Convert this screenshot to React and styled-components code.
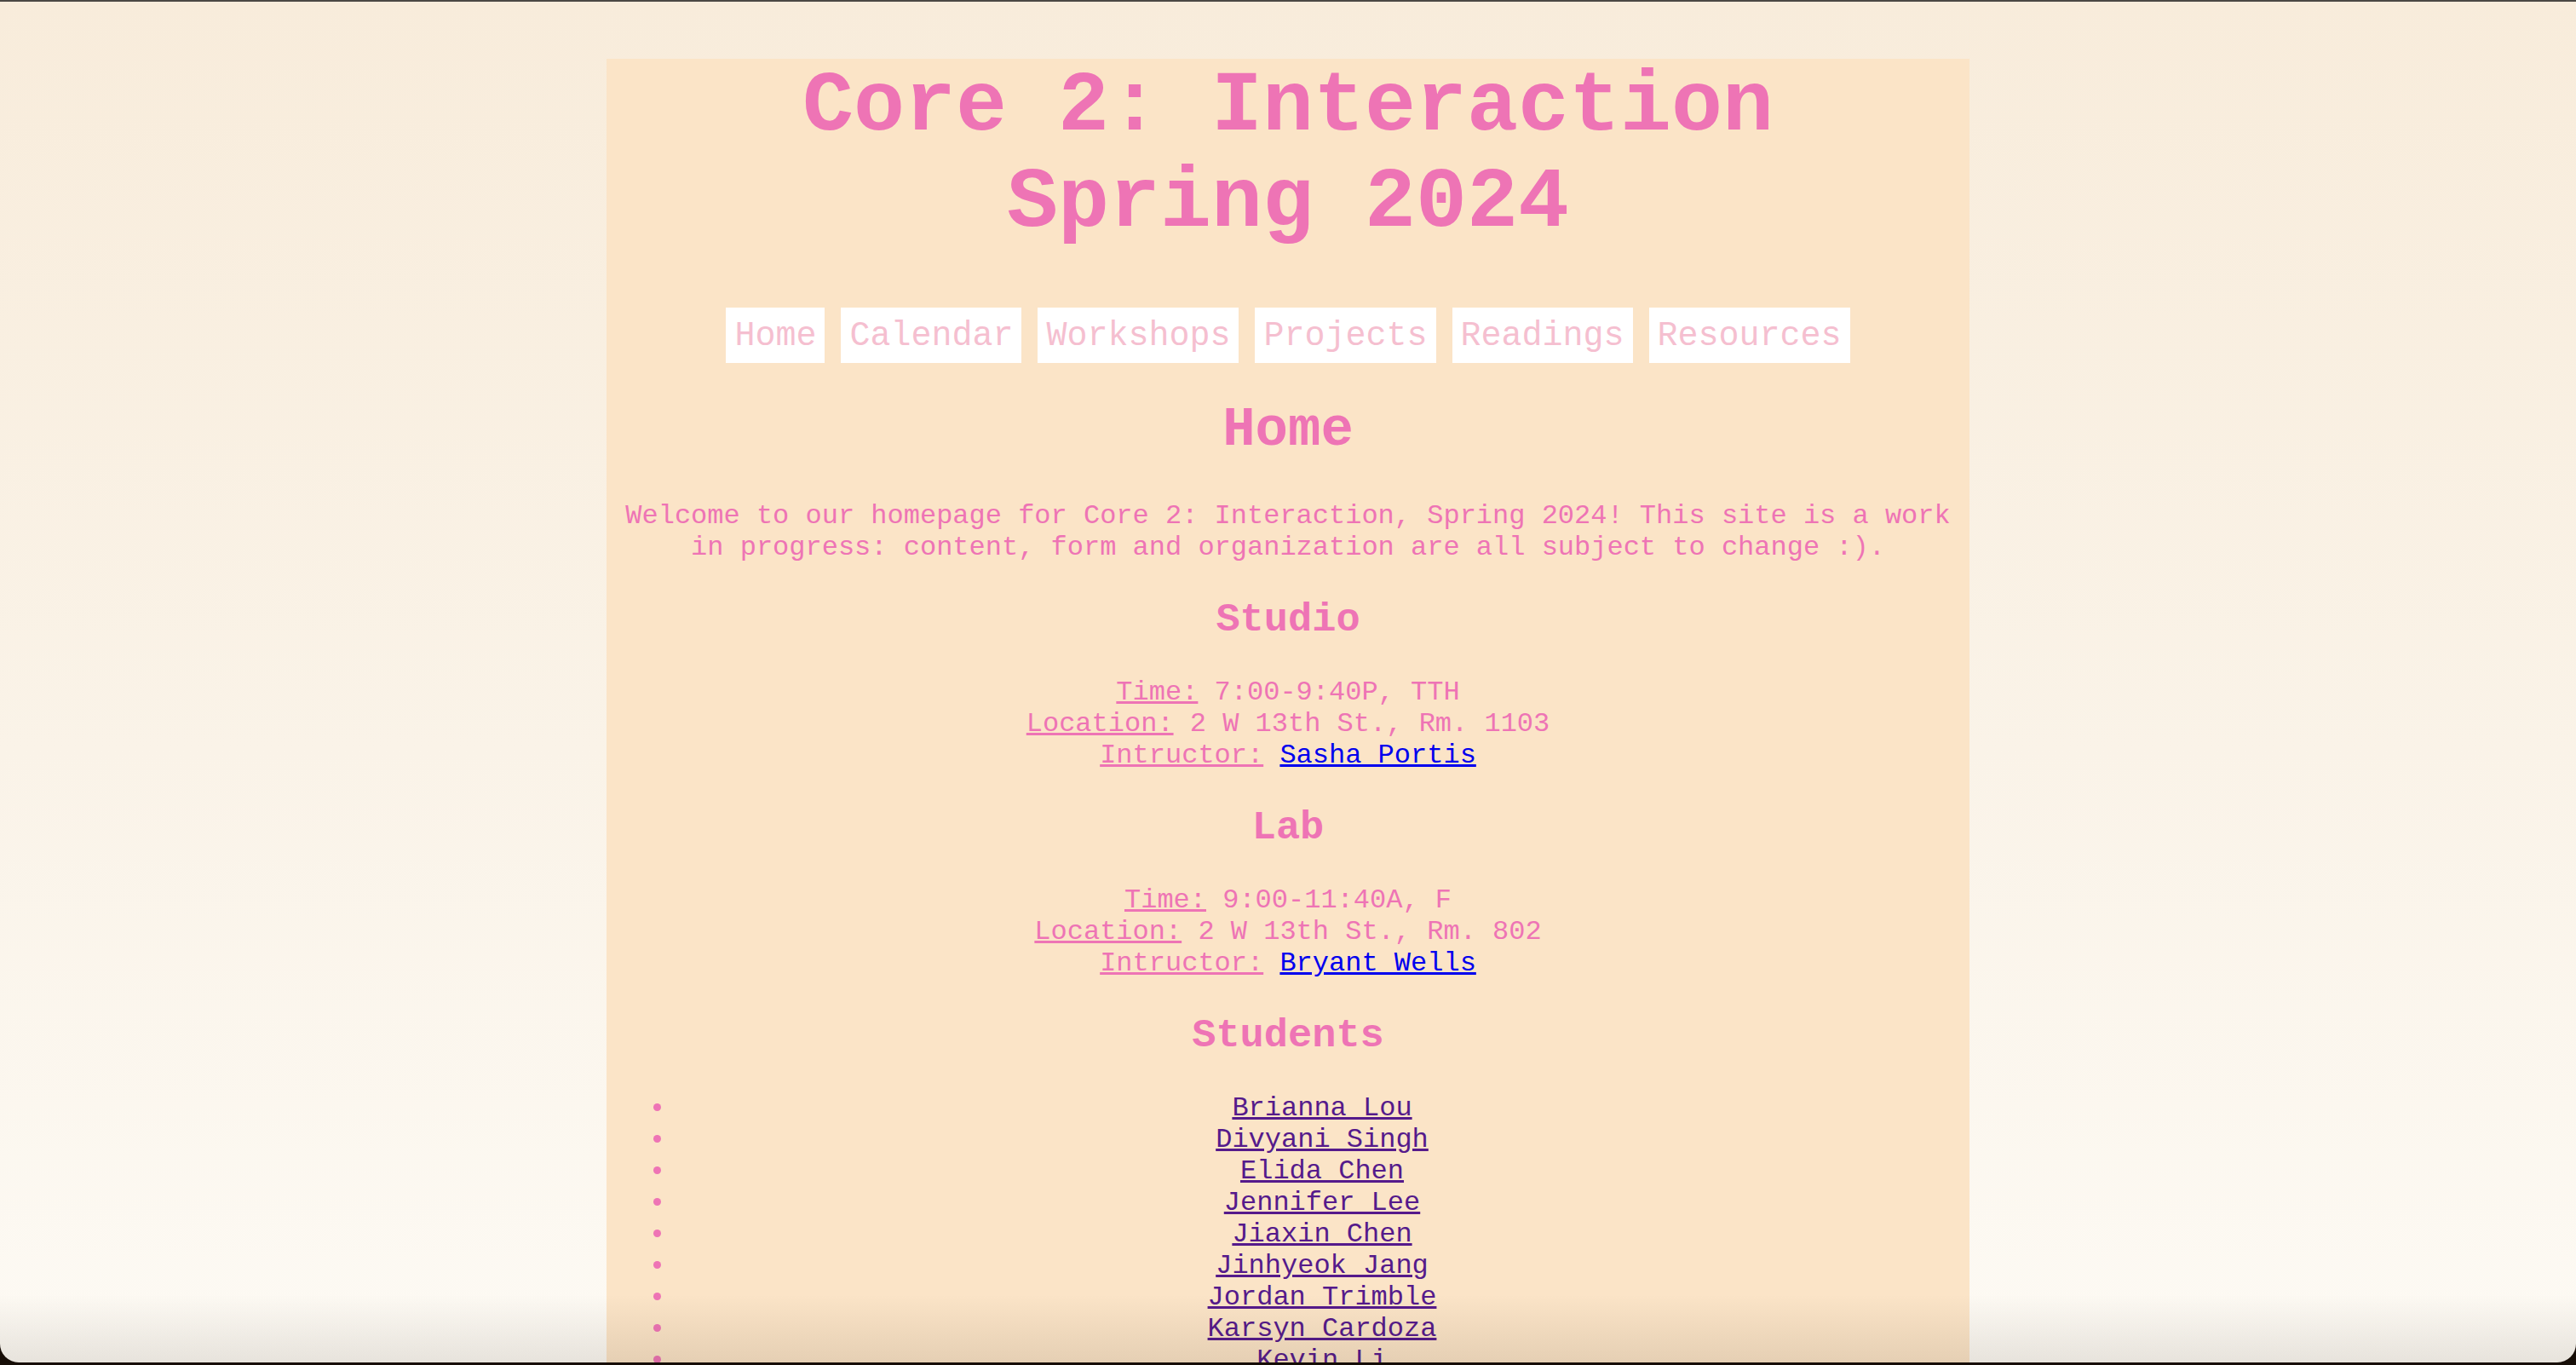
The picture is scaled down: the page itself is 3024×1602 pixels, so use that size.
import React from 'react';
import styled, { createGlobalStyle } from 'styled-components';

const PINK = '#ee74b5';

const GlobalStyle = createGlobalStyle`
  html, body {
    margin: 0;
    padding: 0;
    background: #170e07;
    overflow: hidden;
  }
`;

const Frame = styled.div`
  position: relative;
  box-sizing: border-box;
  height: 1599px;
  border-top: 2px solid #4b4844;
  border-radius: 0 0 22px 22px;
  overflow: hidden;
  background: linear-gradient(180deg, #f8ecdb 0%, #faf3e8 55%, #fdfaf4 100%);
  padding-top: 67px;
`;

const Shade = styled.div`
  position: absolute;
  left: 0;
  right: 0;
  bottom: 0;
  height: 80px;
  pointer-events: none;
  background: linear-gradient(180deg, rgba(0, 0, 0, 0) 0%, rgba(40, 25, 10, 0.1) 100%);
`;

const Container = styled.main`
  width: 1600px;
  margin: 0 auto;
  background: #fbe4c7;
  color: ${PINK};
  font-family: "Liberation Mono", "Courier New", monospace;
  font-size: 32px;
  line-height: 37px;
  text-align: center;
  min-height: 1600px;
`;

const Title = styled.h1`
  margin: 0;
  font-size: 100px;
  line-height: 113px;
  font-weight: bold;
`;

const Nav = styled.nav`
  display: flex;
  justify-content: center;
  gap: 19px;
  margin-top: 66px;
`;

const NavLink = styled.a`
  background: #ffffff;
  color: #f5bfd0;
  font-size: 40px;
  line-height: 45px;
  padding: 11px 10px 9px;
  text-decoration: none;
`;

const PageTitle = styled.h2`
  margin: 43px 0 46px;
  font-size: 64px;
  line-height: 72px;
  font-weight: bold;
`;

const Intro = styled.p`
  margin: 0;
`;

const SectionTitle = styled.h3`
  margin: 40px 0;
  font-size: 47px;
  line-height: 53px;
  font-weight: bold;
`;

const Info = styled.div`
  display: flex;
  flex-direction: column;
  align-items: center;
`;

const Label = styled.span`
  text-decoration: underline;
`;

const Person = styled.a`
  color: ${(p) => (p.$visited ? '#551a8b' : '#0000ee')};
  text-decoration: underline;
`;

const StudentList = styled.ul`
  margin: 0;
  padding-left: 80px;
  list-style: disc outside;

  li::marker {
    color: ${PINK};
  }
`;

const studio = {
  name: 'Studio',
  time: '7:00-9:40P, TTH',
  location: '2 W 13th St., Rm. 1103',
  instructor: 'Sasha Portis',
};

const lab = {
  name: 'Lab',
  time: '9:00-11:40A, F',
  location: '2 W 13th St., Rm. 802',
  instructor: 'Bryant Wells',
};

const students = [
  'Brianna Lou',
  'Divyani Singh',
  'Elida Chen',
  'Jennifer Lee',
  'Jiaxin Chen',
  'Jinhyeok Jang',
  'Jordan Trimble',
  'Karsyn Cardoza',
  'Kevin Li',
  'Lily Park',
  'Maya Ortiz',
];

const navItems = ['Home', 'Calendar', 'Workshops', 'Projects', 'Readings', 'Resources'];

function Section({ data }) {
  return (
    <>
      <SectionTitle>{data.name}</SectionTitle>
      <Info>
        <div>
          <Label>Time:</Label> {data.time}
        </div>
        <div>
          <Label>Location:</Label> {data.location}
        </div>
        <div>
          <Label>Intructor:</Label> <Person href="#">{data.instructor}</Person>
        </div>
      </Info>
    </>
  );
}

export default function App() {
  return (
    <Frame>
      <GlobalStyle />
      <Container>
        <Title>
          Core 2: Interaction
          <br />
          Spring 2024
        </Title>
        <Nav>
          {navItems.map((item) => (
            <NavLink key={item} href="#">{item}</NavLink>
          ))}
        </Nav>
        <PageTitle>Home</PageTitle>
        <Intro>
          Welcome to our homepage for Core 2: Interaction, Spring 2024! This site is a work in
          progress: content, form and organization are all subject to change :).
        </Intro>
        <Section data={studio} />
        <Section data={lab} />
        <SectionTitle>Students</SectionTitle>
        <StudentList>
          {students.map((s) => (
            <li key={s}>
              <Person $visited href="#">{s}</Person>
            </li>
          ))}
        </StudentList>
      </Container>
      <Shade />
    </Frame>
  );
}
